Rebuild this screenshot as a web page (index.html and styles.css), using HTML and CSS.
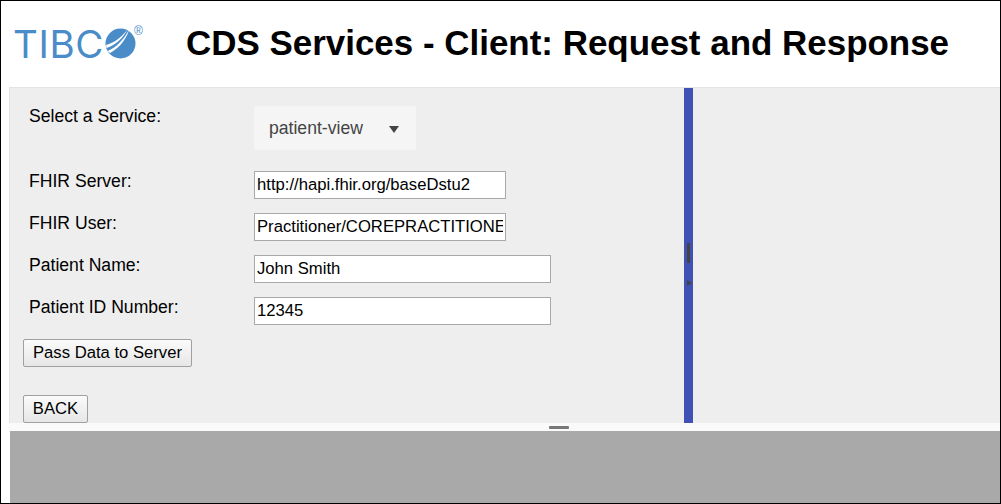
FILE: index.html
```html
<!DOCTYPE html>
<html lang="en">
<head>
    <meta charset="UTF-8">
    <title>CDS Services - Client: Request and Response</title>
    <link rel="stylesheet" href="styles.css">
</head>
<body>
    <div class="frame">
        <!-- Cabecera -->
        <div class="header">
            <div class="logo">
                <span class="logo-text">TIBC</span>
                <svg class="logo-mark" width="31" height="31" viewBox="0 0 31 31">
                    <circle cx="15.5" cy="15.5" r="15" fill="#4a8cc8"/>
                    <path d="M1 17 C9 15 17 9 23 1 C18 10 11 17 1.5 20 Z" fill="#fff"/>
                    <path d="M2.5 23 C11 20 19 11 24 2 C21 12 14 20 5 25 Z" fill="#fff"/>
                </svg>
                <span class="logo-reg">®</span>
            </div>
            <h1>CDS Services - Client: Request and Response</h1>
        </div>

        <div class="panels">
            <div class="form-panel">
                <div class="service-row">
                    <label>Select a Service:</label>
                    <div class="select-box">
                        <span>patient-view</span>
                        <span class="select-arrow"></span>
                    </div>
                </div>
                <div class="field-row">
                    <label>FHIR Server:</label>
                    <input class="short" type="text" value="http://hapi.fhir.org/baseDstu2">
                </div>
                <div class="field-row">
                    <label>FHIR User:</label>
                    <input class="short" type="text" value="Practitioner/COREPRACTITIONER1">
                </div>
                <div class="field-row">
                    <label>Patient Name:</label>
                    <input class="long" type="text" value="John Smith">
                </div>
                <div class="field-row">
                    <label>Patient ID Number:</label>
                    <input class="long" type="text" value="12345">
                </div>
                <button class="pass-button">Pass Data to Server</button>
                <button class="back-button">BACK</button>
            </div>
            <div class="divider">
                <span class="divider-grip"></span>
                <span class="divider-arrow"></span>
            </div>
            <div class="side-panel"></div>
        </div>

        <div class="split-bar"><span class="split-grip"></span></div>
        <div class="response-panel"></div>
    </div>
</body>
</html>
```

FILE: styles.css
```css
/* Estilos generales */
html, body {
    margin: 0;
    height: 100%;
}

body {
    font-family: 'Liberation Sans', Arial, sans-serif;
    background-color: #fff;
}

.frame {
    box-sizing: border-box;
    height: 504px;
    border: 1px solid #000;
    display: flex;
    flex-direction: column;
}

/* Cabecera */
.header {
    height: 86px;
    display: flex;
    align-items: center;
    flex-shrink: 0;
}

.logo {
    display: flex;
    align-items: flex-start;
    width: 185px;
    height: 40px;
    padding-left: 12px;
    box-sizing: border-box;
    color: #4a8cc8;
}

.logo-text {
    width: 92px;
    font-family: 'Inter', sans-serif;
    font-size: 38.5px;
    line-height: 40px;
    letter-spacing: 0.6px;
}

.logo-mark {
    margin-top: 4px;
}

.logo-reg {
    font-size: 12px;
    line-height: 12px;
    margin-top: 1px;
    margin-left: -2px;
}

h1 {
    margin: -2px 0 0;
    font-size: 34.95px;
    font-weight: bold;
    color: #000;
    white-space: nowrap;
}

/* Paneles */
.panels {
    height: 336px;
    margin-left: 8px;
    display: flex;
    flex-shrink: 0;
    border-top: 1px solid #e4e4e4;
    border-left: 1px solid #e4e4e4;
    box-sizing: border-box;
}

.form-panel {
    width: 674px;
    background-color: #eee;
    padding: 18px 0 0 13px;
    box-sizing: border-box;
    display: flex;
    flex-direction: column;
    align-items: flex-start;
    font-size: 17.6px;
    color: #000;
}

.service-row {
    display: flex;
    height: 44px;
    margin-bottom: 21px;
}

.service-row label {
    width: 231px;
    padding-left: 6px;
    box-sizing: border-box;
}

.select-box {
    width: 162px;
    height: 44px;
    background-color: #f5f5f5;
    border-radius: 2px;
    box-sizing: border-box;
    padding-left: 15px;
    display: flex;
    align-items: center;
    color: #444;
}

.select-arrow {
    margin-left: 26px;
    margin-top: 2px;
    border-left: 5px solid transparent;
    border-right: 5px solid transparent;
    border-top: 7px solid #444;
}

.field-row {
    display: flex;
    height: 28px;
    margin-bottom: 14px;
}

.field-row label {
    width: 231px;
    padding-left: 6px;
    box-sizing: border-box;
}

.field-row input {
    box-sizing: border-box;
    height: 28px;
    border: 1px solid #a9a9a9;
    padding: 1px 2px;
    font-family: inherit;
    font-size: 16.67px;
    color: #000;
    background-color: #fff;
}

.short {
    width: 252px;
}

.long {
    width: 297px;
}

button {
    height: 28px;
    padding: 0;
    font-family: inherit;
    font-size: 16.67px;
    color: #000;
    white-space: nowrap;
    background: linear-gradient(#fbfbfb, #e6e6e6);
    border: 1px solid #a0a0a0;
    border-radius: 2px;
}

.pass-button {
    width: 169px;
}

.back-button {
    width: 65px;
    margin-top: 28px;
}

.divider {
    width: 9px;
    background-color: #3f51b5;
    position: relative;
}

.divider-grip {
    position: absolute;
    left: 3px;
    top: 155px;
    width: 3px;
    height: 20px;
    border-radius: 1px;
    background-color: #444;
}

.divider-arrow {
    position: absolute;
    left: 3px;
    top: 192px;
    border-top: 3px solid transparent;
    border-bottom: 3px solid transparent;
    border-left: 5px solid #444;
}

.side-panel {
    flex: 1;
    background-color: #eee;
}

/* Barra inferior */
.split-bar {
    height: 8px;
    margin-left: 8px;
    background-color: #fafafa;
    display: flex;
    flex-shrink: 0;
}

.split-grip {
    width: 20px;
    height: 3px;
    margin-top: 3px;
    margin-left: 540px;
    border-radius: 1px;
    background-color: #777;
}

.response-panel {
    flex: 1;
    margin-left: 9px;
    background-color: #a9a9a9;
}
```
